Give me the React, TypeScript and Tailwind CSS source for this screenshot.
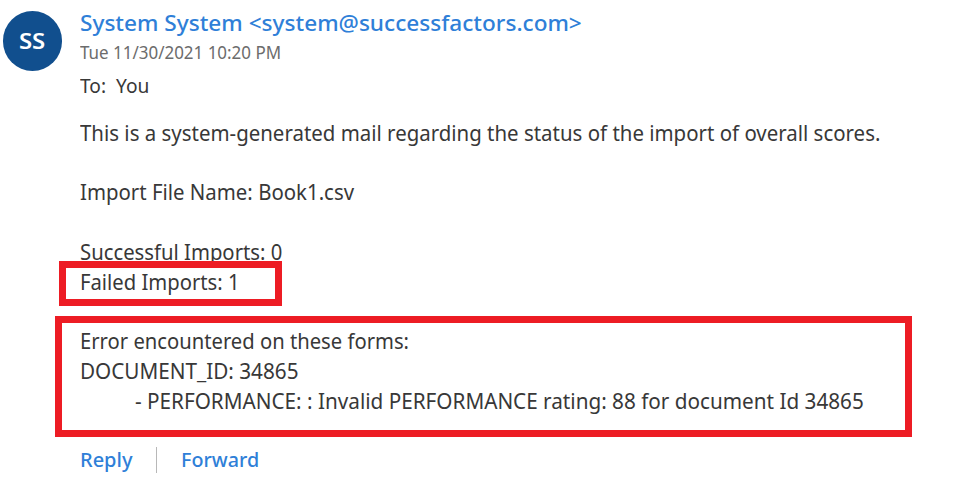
const body = "block origin-left whitespace-pre";

export default function App() {
  return (
    <main className="relative flex h-[490px] w-[973px] overflow-hidden bg-white font-['Noto_Sans','Open_Sans',sans-serif] text-[#383838]">
      <div className="w-20 shrink-0 pl-[2.5px] pt-[11px]">
        <div className="flex size-[59.5px] items-center justify-center rounded-full bg-[#114f8e] text-[22px] font-[600] text-white">
          <span className="scale-x-[1.09]">SS</span>
        </div>
      </div>
      <div className="flex flex-1 flex-col">
        <header className="flex flex-col">
          <h1 className="mt-[7px] h-[30px] w-max origin-left scale-x-[1.028] whitespace-nowrap text-[22px] leading-[30px] font-[500] text-[#2f7fd8]">
            System System &lt;system@successfactors.com&gt;
          </h1>
          <time className="mt-[3px] h-6 w-max origin-left scale-x-[0.942] whitespace-nowrap text-[18px] leading-6 font-normal text-[#6c6c6c]">
            Tue 11/30/2021 10:20 PM
          </time>
          <p className="mt-[8px] h-[26px] w-max origin-left scale-x-[0.935] whitespace-pre text-[20.5px] leading-[26px] font-normal">To:  You</p>
        </header>
        <section className="mt-[20px] flex flex-col items-start text-[22px] leading-[29.8px] font-normal">
          <p className={`${body} scale-x-[0.929]`}>This is a system-generated mail regarding the status of the import of overall scores.</p>
          <p className={`${body} mt-[29.4px] scale-x-[0.927]`}>Import File Name: Book1.csv</p>
          <p className={`${body} mt-[29.8px] scale-x-[0.922]`}>Successful Imports: 0</p>
          <p className={`${body} mt-[0.2px] scale-x-[0.92]`}>Failed Imports: 1</p>
          <p className={`${body} mt-[29.4px] scale-x-[0.919]`}>Error encountered on these forms:</p>
          <p className={`${body} scale-x-[0.941]`}>DOCUMENT_ID: 34865</p>
          <p className={`${body} mt-[0.2px] ml-[55px] scale-x-[0.941]`}>- PERFORMANCE: : Invalid PERFORMANCE rating: 88 for document Id 34865</p>
        </section>
        <footer className="mt-[31px] flex h-[26px] items-center text-[20px] leading-[26px] font-[500] text-[#2f7fd8]">
          <button className="w-[76px] text-left">Reply</button>
          <span className="h-[26px] w-px bg-[#b8b8b8]" />
          <button className="ml-[24px] origin-left scale-x-[0.985]">Forward</button>
        </footer>
      </div>
      <div className="absolute left-[59px] top-[261px] h-[45px] w-[223px] border-[7px] border-[#ed1c24]" />
      <div className="absolute left-[55px] top-[316px] h-[121px] w-[857px] border-[7px] border-[#ed1c24]" />
    </main>
  );
}
